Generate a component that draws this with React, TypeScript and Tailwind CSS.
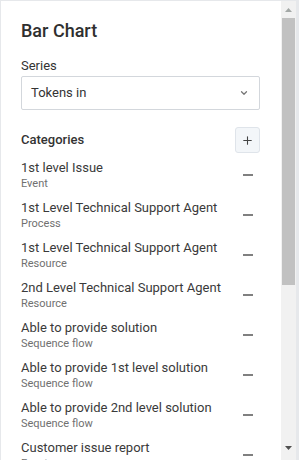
import { Plus, ChevronDown } from "lucide-react";

const categories = [
  { name: "1st level Issue", type: "Event" },
  { name: "1st Level Technical Support Agent", type: "Process" },
  { name: "1st Level Technical Support Agent", type: "Resource" },
  { name: "2nd Level Technical Support Agent", type: "Resource" },
  { name: "Able to provide solution", type: "Sequence flow" },
  { name: "Able to provide 1st level solution", type: "Sequence flow" },
  { name: "Able to provide 2nd level solution", type: "Sequence flow" },
  { name: "Customer issue report", type: "Event" },
];

export default function App() {
  return (
    <div className="h-[460px] w-[299px] bg-white border-l border-t border-r-[3px] border-[#e6e8eb] flex overflow-hidden font-['Roboto',sans-serif] text-[#333]">
      <div className="flex-1 min-w-0 overflow-hidden pl-5 pr-[21px] pt-[18px]">
        <h2 className="text-[18px] leading-6 font-medium text-[#2f2f2f] mb-[14px]">Bar Chart</h2>

        <label className="block text-[13px] leading-[18px] mb-px">Series</label>
        <div className="h-[34px] border border-[#d3d7dc] rounded-[2px] flex items-center justify-between pl-[9px] pr-[10px]">
          <span className="text-[13px] text-[#333]">Tokens in</span>
          <ChevronDown className="w-[10px] h-[10px] text-[#777]" strokeWidth={3} />
        </div>

        <div className="mt-[17px] flex items-center justify-between h-[26px]">
          <span className="text-[13px] font-medium">Categories</span>
          <button className="w-[25px] h-[26px] rounded-[3px] border border-[#dfe4ea] bg-[#f3f6f9] flex items-center justify-center">
            <Plus className="w-[13px] h-[13px] text-[#444]" strokeWidth={2} />
          </button>
        </div>

        <ul className="mt-[6px] flex flex-col gap-2">
          {categories.map((c, i) => (
            <li key={i} className="flex items-center justify-between">
              <div className="whitespace-nowrap">
                <div className="text-[13px] leading-[18px] text-[#3a3a3a]">{c.name}</div>
                <div className="text-[11px] leading-[14px] text-[#707070]">{c.type}</div>
              </div>
              <div className="w-[25px] flex justify-center">
                <span className="block w-[10px] h-[2px] bg-[#808080]" />
              </div>
            </li>
          ))}
        </ul>
      </div>

      {/* scrollbar */}
      <div className="w-[15px] shrink-0 bg-[#f1f1f1] flex flex-col items-center">
        <div className="h-[17px] flex items-center justify-center">
          <svg width="7" height="4" viewBox="0 0 7 4"><path d="M0 4 L3.5 0 L7 4 Z" fill="#a3a8a6" /></svg>
        </div>
        <div className="w-[13px] h-[267px] bg-[#c1c1c1]" />
        <div className="flex-1" />
        <div className="h-[17px] flex items-center justify-center mb-[4px]">
          <svg width="7" height="4" viewBox="0 0 7 4"><path d="M0 0 L7 0 L3.5 4 Z" fill="#505050" /></svg>
        </div>
      </div>
    </div>
  );
}
